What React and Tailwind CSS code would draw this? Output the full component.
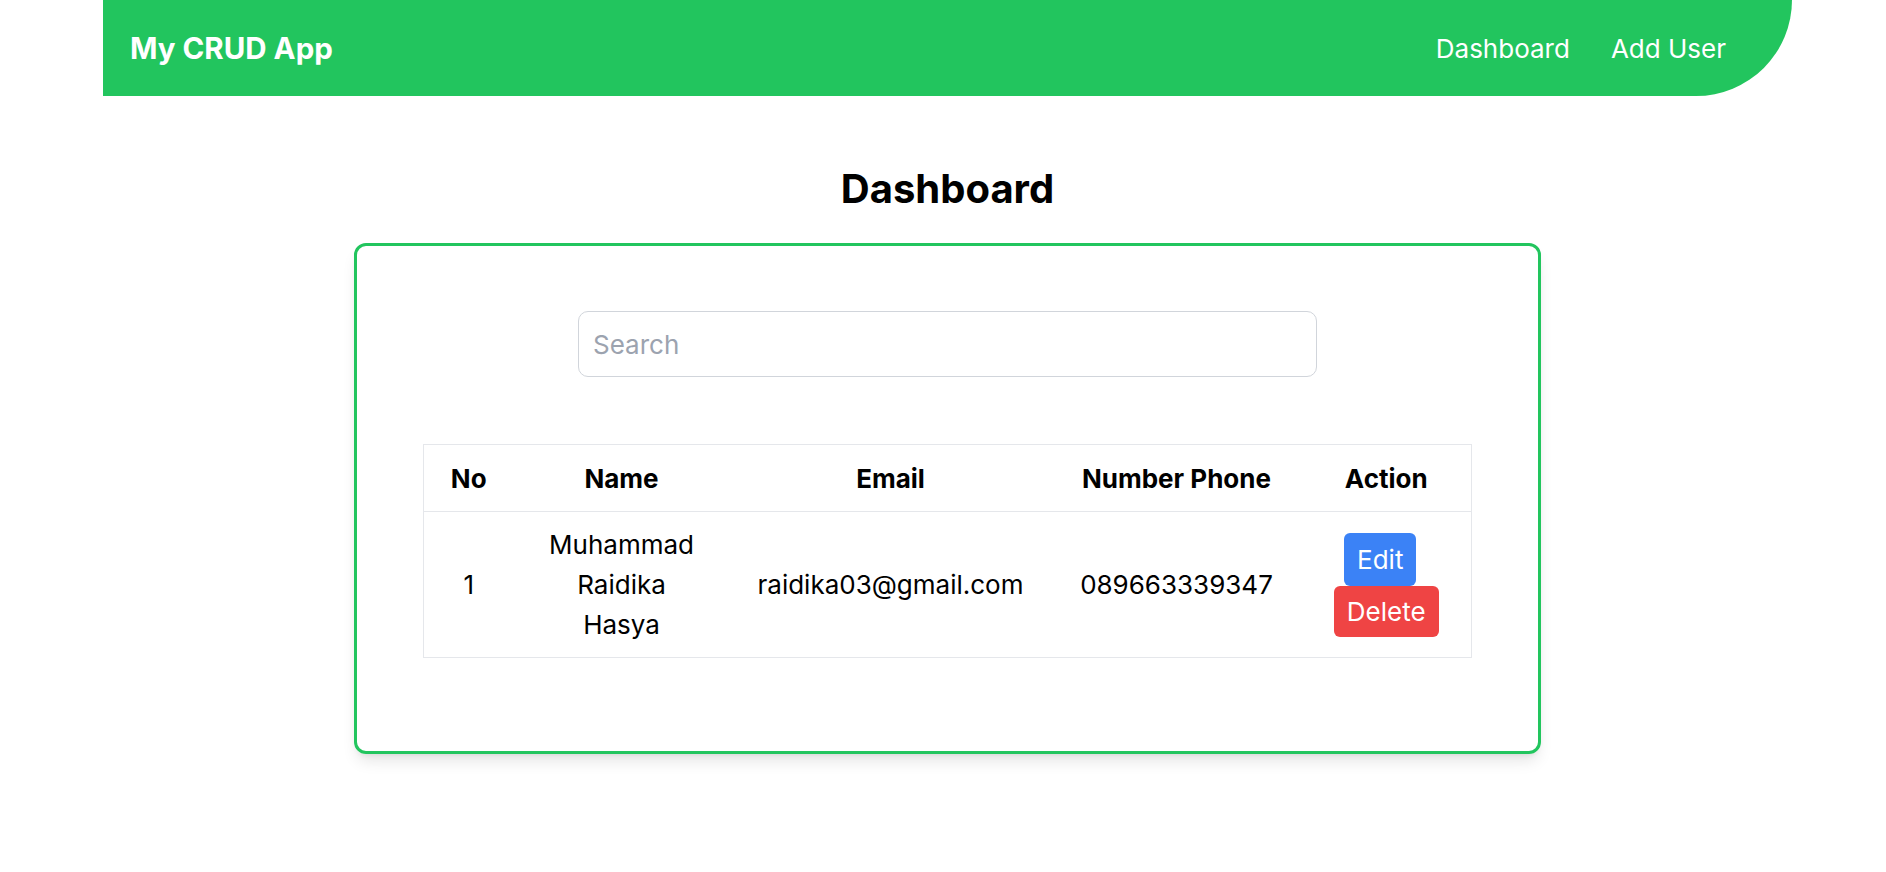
export default function App() {
  const users = [
    {
      id: 1,
      name: "Muhammad Raidika Hasya",
      email: "raidika03@gmail.com",
      phone: "089663339347",
    },
  ];

  return (
    <div className="min-h-screen bg-white font-['Inter',sans-serif] text-black">
      {/* Navbar */}
      <nav className="ml-[103px] w-[1689px] h-[96px] bg-[#22c55e] rounded-br-[96px] flex items-center justify-between pl-[27px] pr-[66px]">
        <h1 className="text-[29.5px] font-bold text-white">My CRUD App</h1>
        <div className="flex items-center gap-[41px] text-[26px] text-white">
          <a href="#">Dashboard</a>
          <a href="#">Add User</a>
        </div>
      </nav>

      <main className="ml-[103px] w-[1689px] flex flex-col items-center">
        <h2 className="mt-[69px] text-[40px] leading-[48px] font-bold">
          Dashboard
        </h2>

        {/* Card */}
        <div className="mt-[30px] w-[1187px] border-[3px] border-[#22c55e] rounded-xl shadow-lg flex flex-col items-center pt-[65px] pb-[93px]">
          <input
            type="text"
            placeholder="Search"
            className="w-[739px] h-[66px] border border-[#d1d5db] rounded-[10px] px-[14px] text-[26px] placeholder:text-[#9ca3af] focus:outline-none"
          />

          <table className="mt-[67px] w-[1049px] border border-[#e5e7eb] border-collapse text-[26px] text-center">
            <thead>
              <tr className="h-[67px] border-b border-[#e5e7eb]">
                <th className="w-[90px] font-bold">No</th>
                <th className="w-[216px] font-bold">Name</th>
                <th className="w-[322px] font-bold">Email</th>
                <th className="w-[250px] font-bold">Number Phone</th>
                <th className="w-[170px] font-bold">Action</th>
              </tr>
            </thead>
            <tbody>
              {users.map((user, index) => (
                <tr key={user.id} className="h-[146px]">
                  <td>{index + 1}</td>
                  <td>
                    <div className="w-[155px] mx-auto leading-[40px]">
                      {user.name}
                    </div>
                  </td>
                  <td>{user.email}</td>
                  <td>{user.phone}</td>
                  <td>
                    <div className="flex flex-col items-center">
                      <button className="bg-[#3b82f6] text-white rounded-md px-[13px] py-[8px] leading-[37px] mr-[12px]">
                        Edit
                      </button>
                      <button className="bg-[#ef4444] text-white rounded-md px-[13px] py-[7px] leading-[37px]">
                        Delete
                      </button>
                    </div>
                  </td>
                </tr>
              ))}
            </tbody>
          </table>
        </div>
      </main>
    </div>
  );
}
